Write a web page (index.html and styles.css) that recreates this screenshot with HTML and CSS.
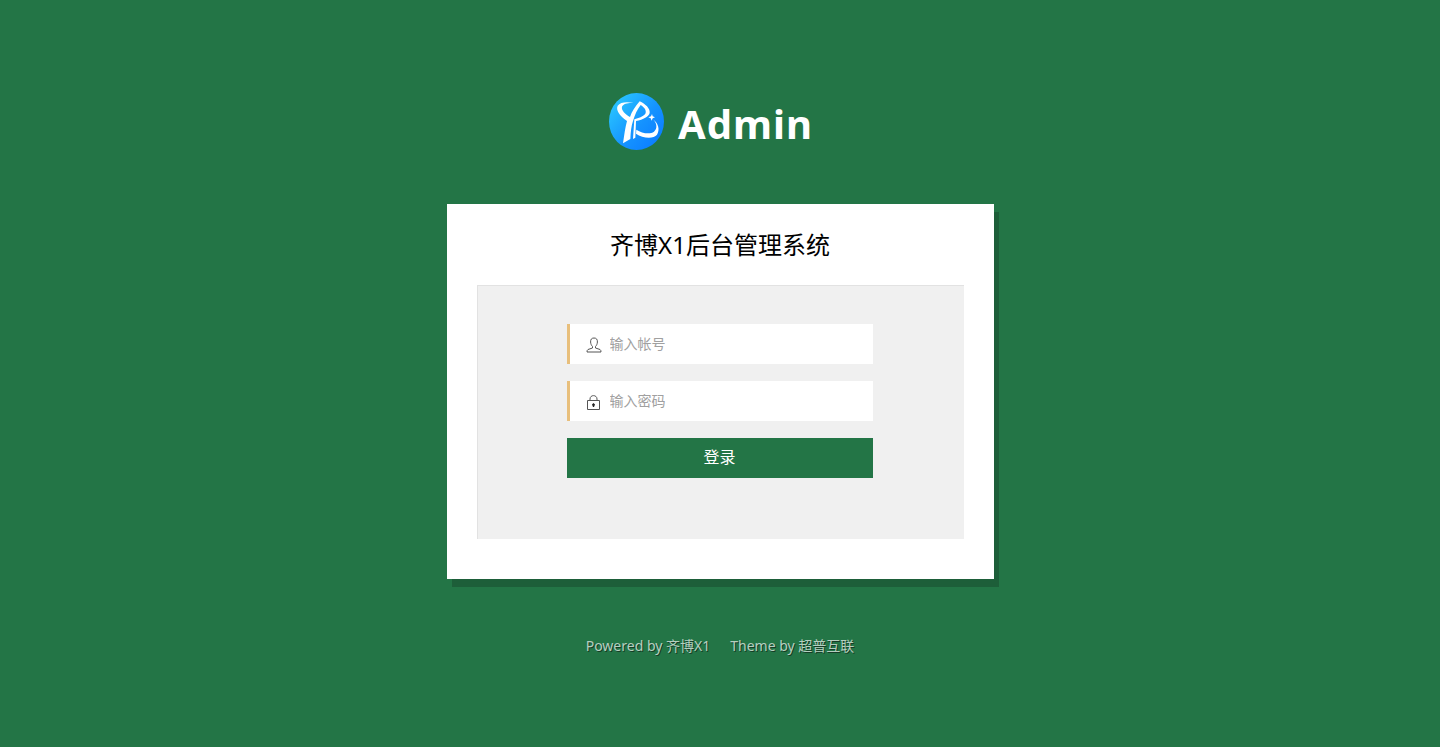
FILE: index.html
```html
<!DOCTYPE html>
<html lang="zh-CN">
<head>
<meta charset="utf-8">
<meta name="viewport" content="width=device-width, initial-scale=1">
<title>齐博X1后台管理系统</title>
<link rel="stylesheet" href="styles.css">
</head>
<body>
<header class="brand">
  <svg class="brand-mark" viewBox="27 24 165 171" aria-hidden="true">
    <defs>
      <linearGradient id="sky" x1="0" y1="0.1" x2="0.9" y2="0.9">
        <stop offset="0" stop-color="#2ccbff"/>
        <stop offset="0.6" stop-color="#1593ff"/>
        <stop offset="1" stop-color="#0b7dff"/>
      </linearGradient>
    </defs>
    <ellipse cx="109.500" cy="109.500" rx="82.500" ry="85.500" fill="url(#sky)"/>
    <g fill="#fff">
      <path d="M101 54C80 49 61 51 53 62C47 75 58 92 81 108C76 126 73 148 69 175L91 162C92 140 94 122 99 108C104 91 112 72 122 60C135 68 141 79 135 88C129 95 116 100 103 103L99 162L106 158L108 108C130 104 147 95 149 84C151 70 136 57 119 49C105 65 95 81 90 96C76 88 63 75 66 65C71 55 85 53 101 54Z"/>
      <path d="M109 134C127 146 151 148 162 140C173 131 171 115 159 103C176 116 180 135 171 149C160 163 128 160 108 146Z"/>
      <path d="M156 87L158 94L165 97L158 100L155 107L152 100L145 97L153 94Z"/>
    </g>
  </svg>
  <span class="brand-name">Admin</span>
</header>
<main class="card">
  <h1 class="title">齐博X1后台管理系统</h1>
  <div class="panel">
    <form class="login">
      <div class="field">
        <label for="user" aria-label="帐号"><svg class="icon" viewBox="0 0 16 16"><path d="M8 1C5.500 1 4.500 2.500 4.600 5C4.700 7 5.500 8.500 6.500 9.500V11L2 12.500Q1 13 1 15H15Q15 13 14 12.500L9.500 11V9.500C10.500 8.500 11.300 7 11.400 5C11.500 2.500 10.500 1 8 1Z"/></svg></label>
        <input id="user" type="text" placeholder="输入帐号">
      </div>
      <div class="field">
        <label for="pass" aria-label="密码"><svg class="icon" viewBox="0 0 16 16"><path d="M1.500 6.500H13.500V15.500H1.500ZM4 6.500V5C4 0.500 11 0.500 11 5V6.500"/><path class="keyhole" d="M7.500 9L9 10.500L8 13H7L6 10.500Z"/></svg></label>
        <input id="pass" type="password" placeholder="输入密码">
      </div>
      <button class="submit" type="submit">登录</button>
    </form>
  </div>
</main>
<footer class="footer">
  <span>Powered by <a href="#">齐博X1</a></span>
  <span>Theme by <a href="#">超普互联</a></span>
</footer>
</body>
</html>
```
FILE: styles.css
```css
* {
  box-sizing: border-box;
}

body {
  margin: 0;
  padding: 93px 16px 24px;
  min-height: 100vh;
  display: flex;
  flex-direction: column;
  align-items: center;
  background: #237546;
  font-family: "Noto Sans", "Noto Sans CJK SC", sans-serif;
}

.brand {
  display: flex;
  align-items: center;
  gap: 14px;
  height: 57px;
  margin-right: 18px;
}

.brand-mark {
  width: 55px;
  height: 57px;
}

.brand-name {
  padding-top: 4px;
  color: #fff;
  font-size: 40px;
  font-weight: 700;
  line-height: 56px;
  letter-spacing: 1px;
}

.card {
  width: 100%;
  max-width: 547px;
  margin-top: 54px;
  padding: 20px 30px 40px;
  background: #fff;
  box-shadow: 5px 8px 0 #1d5e39;
}

.title {
  margin: 0 0 20px;
  color: #000;
  font-size: 24px;
  font-weight: 400;
  line-height: 41px;
  text-align: center;
}

.panel {
  padding: 38px 26px 61px 24px;
  border: solid #e2e2e2;
  border-width: 1px 0 0 1px;
  background: #f0f0f0;
}

.login {
  display: flex;
  flex-direction: column;
  gap: 17px;
  max-width: 306px;
  margin: 0 auto;
}

.field {
  display: flex;
  align-items: center;
  height: 40px;
  padding-left: 16px;
  border-left: 3px solid #e8bf7c;
  background: #fff;
}

.field label {
  display: flex;
  padding-top: 2px;
}

.icon {
  width: 16px;
  height: 16px;
  fill: none;
  stroke: #555;
  stroke-width: 1;
}

.icon .keyhole {
  fill: #222;
  stroke: none;
}

.field input {
  flex: 1;
  min-width: 0;
  height: 40px;
  padding: 0 8px 2px;
  border: 0;
  outline: 0;
  background: transparent;
  color: #333;
  font: inherit;
  font-size: 14px;
}

.field input::placeholder {
  color: #a0a0a0;
}

.submit {
  height: 40px;
  padding: 0 0 4px;
  border: 0;
  background: #237546;
  color: #fff;
  font: inherit;
  font-size: 16px;
  cursor: pointer;
}

.footer {
  display: flex;
  gap: 20px;
  margin-top: 56px;
  color: #b5cfc0;
  font-size: 14px;
  line-height: 22px;
  text-shadow: 1px 1px 0 #153d26;
}

.footer a {
  color: inherit;
  text-decoration: none;
}
```
